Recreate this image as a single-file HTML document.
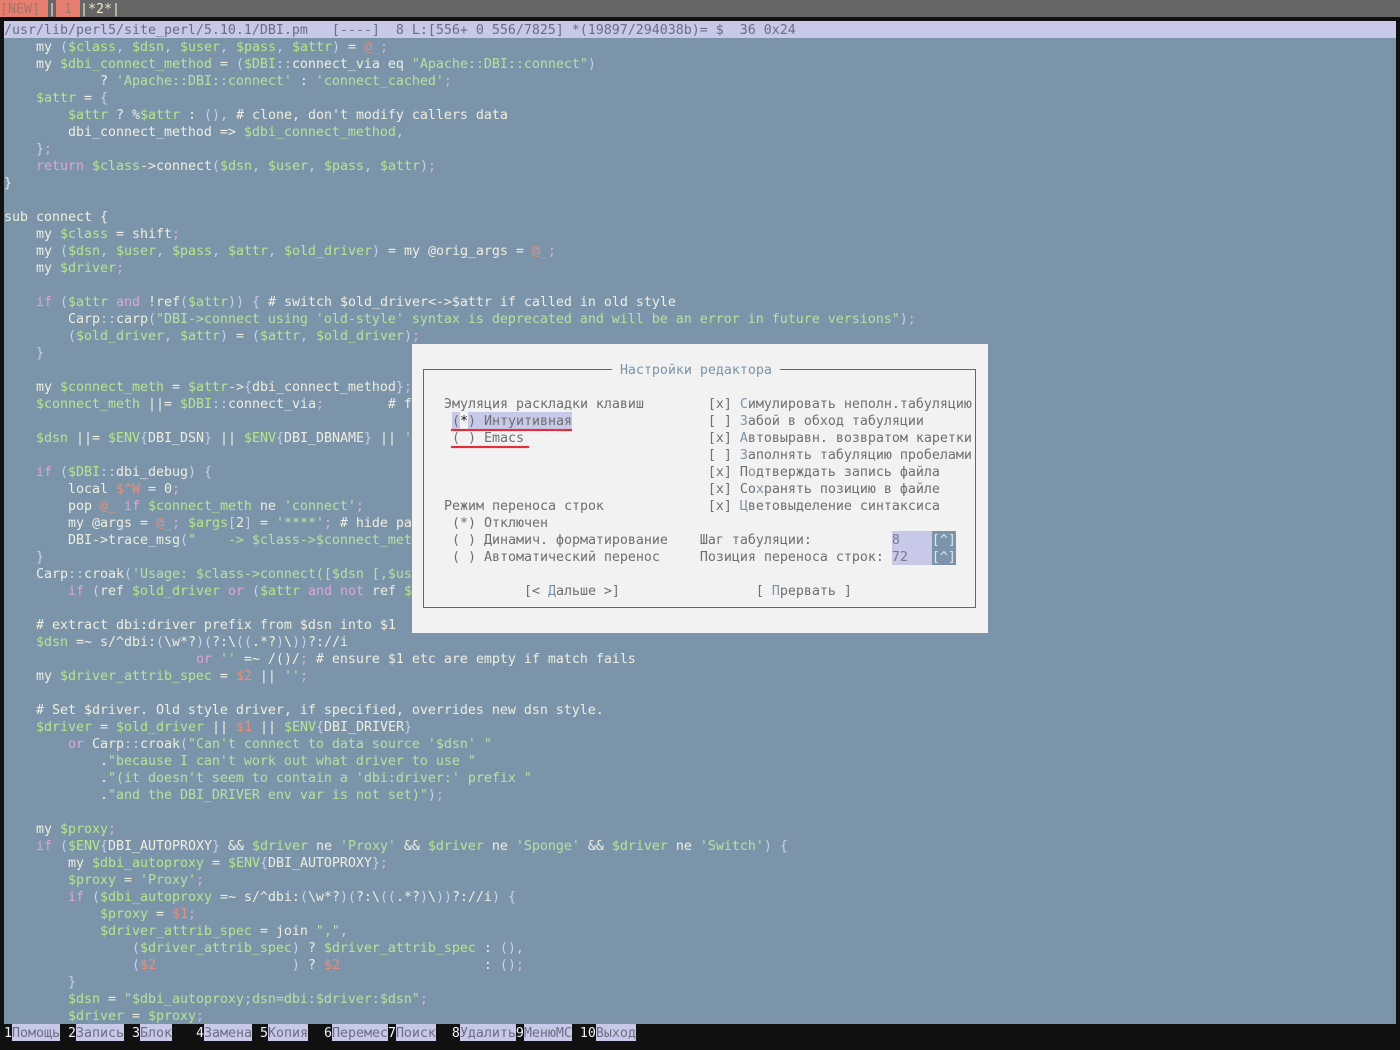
<!DOCTYPE html>
<html><head><meta charset="utf-8"><style>
html,body{margin:0;padding:0;width:1400px;height:1050px;overflow:hidden;background:#111}
pre{margin:0;font:13.33px/17px "DejaVu Sans Mono","Liberation Mono",monospace;letter-spacing:-.027px;white-space:pre;position:absolute}
#top{position:absolute;left:0;top:0;width:1400px;height:17px;background:#666}
#top pre{left:0;top:1px;color:#f0e8c8}
.sal{background:#e57f70;color:#a87468}
#st{position:absolute;left:4px;top:21px;width:1392px;height:17px;background:#c8c8e8}
#st pre{left:0;top:1px;color:#6a6e80}
#ed{position:absolute;left:4px;top:38px;width:1392px;height:986px;background:#7b94aa;overflow:hidden}
#ed pre{left:0;top:1px;color:#eeeee0}
b{font-weight:normal;color:#b6e68e}
i{font-style:normal;color:#c6d0ea}
s{text-decoration:none;color:#e5907c}
em{font-style:normal;color:#dca6dc}
u{text-decoration:none;color:#b9e0a0}
a{color:#d8aee0}
#dlg{position:absolute;left:412px;top:344px;width:576px;height:289px;background:#f2f2f2}
#dlg pre{left:0;top:1px;color:#6c7070}
#box{position:absolute;left:11px;top:25px;width:551px;height:237px;border:1px solid #666}
#gap{position:absolute;left:200px;top:20px;width:168px;height:10px;background:#f2f2f2}
.h{color:#7b94aa}
.blk{display:inline-block;height:17px;line-height:19px;vertical-align:top;position:relative;top:-1px}
.sel{background:#c8c8e8}
.cur{display:inline-block;height:17px;line-height:19px;vertical-align:top;background:#f4f4f4;color:#111}
.inp{background:#c8c8e8;color:#777c88}
.sp{background:#7b94aa;color:#dfe6f0}
.ul{position:absolute;height:2px;background:#e0303e;box-shadow:0 0 1px #e88}
#fn{position:absolute;left:4px;top:1024px;width:1392px;height:17px}
#fn pre{left:0;top:1px;color:#f2f2f2}
#fn span{background:#c8c8e8;color:#6c7084}
</style></head><body>
<div id="top"><pre><span class="sal blk">[NEW] </span>|<span class="sal blk"> 1 </span>|*2*|</pre></div>
<div id="st"><pre>/usr/lib/perl5/site_perl/5.10.1/DBI.pm   [----]  8 L:[556+ 0 556/7825] *(19897/294038b)= $  36 0x24</pre></div>
<div id="ed"><pre>    my <i>(</i><b>$class</b><i>,</i> <b>$dsn</b><i>,</i> <b>$user</b><i>,</i> <b>$pass</b><i>,</i> <b>$attr</b><i>)</i> = <s>@_</s><a>;</a>
    my <b>$dbi_connect_method</b> = <i>(</i><b>$DBI</b><i>::</i>connect_via eq <u>"Apache::DBI::connect"</u><i>)</i>
            ? <u>'Apache::DBI::connect'</u> : <u>'connect_cached'</u><a>;</a>
    <b>$attr</b> = <i>{</i>
        <b>$attr</b> ? %<b>$attr</b> : <i>(),</i> # clone, don't modify callers data
        dbi_connect_method =&gt; <b>$dbi_connect_method</b><i>,</i>
    <i>}</i><a>;</a>
    <em>return</em> <b>$class</b>-&gt;connect<i>(</i><b>$dsn</b><i>,</i> <b>$user</b><i>,</i> <b>$pass</b><i>,</i> <b>$attr</b><i>)</i><a>;</a>
}

sub connect {
    my <b>$class</b> = shift<a>;</a>
    my <i>(</i><b>$dsn</b><i>,</i> <b>$user</b><i>,</i> <b>$pass</b><i>,</i> <b>$attr</b><i>,</i> <b>$old_driver</b><i>)</i> = my @orig_args = <s>@_</s><a>;</a>
    my <b>$driver</b><a>;</a>

    <em>if</em> <i>(</i><b>$attr</b> <em>and</em> !ref<i>(</i><b>$attr</b><i>))</i> <i>{</i> # switch $old_driver&lt;-&gt;$attr if called in old style
        Carp<i>::</i>carp<i>(</i><u>"DBI-&gt;connect using 'old-style' syntax is deprecated and will be an error in future versions"</u><i>)</i><a>;</a>
        <i>(</i><b>$old_driver</b><i>,</i> <b>$attr</b><i>)</i> = <i>(</i><b>$attr</b><i>,</i> <b>$old_driver</b><i>)</i><a>;</a>
    <i>}</i>

    my <b>$connect_meth</b> = <b>$attr</b>-&gt;<i>{</i>dbi_connect_method<i>}</i><a>;</a>
    <b>$connect_meth</b> ||= <b>$DBI</b><i>::</i>connect_via<a>;</a>        # f

    <b>$dsn</b> ||= <b>$ENV</b><i>{</i>DBI_DSN<i>}</i> || <b>$ENV</b><i>{</i>DBI_DBNAME<i>}</i> || <u>'</u>

    <em>if</em> <i>(</i><b>$DBI</b><i>::</i>dbi_debug<i>)</i> <i>{</i>
        local <s>$^W</s> = 0<a>;</a>
        pop <s>@_</s> <em>if</em> <b>$connect_meth</b> ne <u>'connect'</u><a>;</a>
        my @args = <s>@_</s><a>;</a> <b>$args</b><i>[</i>2<i>]</i> = <u>'****'</u><a>;</a> # hide pa
        DBI-&gt;trace_msg<i>(</i><u>"    -&gt; $class-&gt;$connect_met</u>
    <i>}</i>
    Carp<i>::</i>croak<i>(</i><u>'Usage: $class-&gt;connect([$dsn [,$us</u>
        <em>if</em> <i>(</i>ref <b>$old_driver</b> <em>or</em> <i>(</i><b>$attr</b> <em>and</em> <em>not</em> ref <b>$</b>

    # extract dbi:driver prefix from $dsn into $1
    <b>$dsn</b> =~ s/^dbi:<i>(</i>\w*?<i>)(</i>?:\<i>((</i>.*?<i>)</i>\<i>))</i>?://i
                        <em>or</em> <u>''</u> =~ /()/<a>;</a> # ensure $1 etc are empty if match fails
    my <b>$driver_attrib_spec</b> = <s>$2</s> || <u>''</u><a>;</a>

    # Set $driver. Old style driver, if specified, overrides new dsn style.
    <b>$driver</b> = <b>$old_driver</b> || <s>$1</s> || <b>$ENV</b><i>{</i>DBI_DRIVER<i>}</i>
        <em>or</em> Carp<i>::</i>croak<i>(</i><u>"Can't connect to data source '$dsn' "</u>
            .<u>"because I can't work out what driver to use "</u>
            .<u>"(it doesn't seem to contain a 'dbi:driver:' prefix "</u>
            .<u>"and the DBI_DRIVER env var is not set)"</u><i>)</i><a>;</a>

    my <b>$proxy</b><a>;</a>
    <em>if</em> <i>(</i><b>$ENV</b><i>{</i>DBI_AUTOPROXY<i>}</i> &amp;&amp; <b>$driver</b> ne <u>'Proxy'</u> &amp;&amp; <b>$driver</b> ne <u>'Sponge'</u> &amp;&amp; <b>$driver</b> ne <u>'Switch'</u><i>)</i> <i>{</i>
        my <b>$dbi_autoproxy</b> = <b>$ENV</b><i>{</i>DBI_AUTOPROXY<i>}</i><a>;</a>
        <b>$proxy</b> = <u>'Proxy'</u><a>;</a>
        <em>if</em> <i>(</i><b>$dbi_autoproxy</b> =~ s/^dbi:<i>(</i>\w*?<i>)(</i>?:\<i>((</i>.*?<i>)</i>\<i>))</i>?://i<i>)</i> <i>{</i>
            <b>$proxy</b> = <s>$1</s><a>;</a>
            <b>$driver_attrib_spec</b> = join <u>","</u><i>,</i>
                <i>(</i><b>$driver_attrib_spec</b><i>)</i> ? <b>$driver_attrib_spec</b> : <i>(),</i>
                <i>(</i><s>$2</s>                 <i>)</i> ? <s>$2</s>                  : <i>()</i><a>;</a>
        <i>}</i>
        <b>$dsn</b> = <u>"$dbi_autoproxy;dsn=dbi:$driver:$dsn"</u><a>;</a>
        <b>$driver</b> = <b>$proxy</b><a>;</a></pre></div>
<div id="dlg">
<div id="box"></div><div id="gap"></div>
<pre>

                          <span class="h">Настройки редактора</span>

    Эмуляция раскладки клавиш        [x] <span class="h">С</span>имулировать неполн.табуляцию
     <span class="sel blk">(<span class="cur">*</span>) Интуитивная</span>                 [ ] <span class="h">З</span>абой в обход табуляции
     ( ) Emacs                       [x] <span class="h">А</span>втовыравн. возвратом каретки
                                     [ ] <span class="h">З</span>аполнять табуляцию пробелами
                                     [x] П<span class="h">о</span>дтверждать запись файла
                                     [x] Со<span class="h">х</span>ранять позицию в файле
    Режим переноса строк             [x] <span class="h">Ц</span>ветовыделение синтаксиса
     (*) Отключен
     ( ) Динамич. форматирование    Шаг табуляции:          <span class="inp blk">8    </span><span class="sp blk">[^]</span>
     ( ) Автоматический перенос     Позиция переноса строк: <span class="inp blk">72   </span><span class="sp blk">[^]</span>

              [&lt; <span class="h">Д</span>альше &gt;]                 [ <span class="h">П</span>рервать ]</pre>
<div class="ul" style="left:39px;top:85px;width:121px"></div>
<div class="ul" style="left:39px;top:102px;width:78px"></div>
</div>
<div id="fn"><pre>1<span class="blk">Помощь</span> 2<span class="blk">Запись</span> 3<span class="blk">Блок</span>   4<span class="blk">Замена</span> 5<span class="blk">Копия</span>  6<span class="blk">Перемес</span>7<span class="blk">Поиск</span>  8<span class="blk">Удалить</span>9<span class="blk">МенюМС</span> 10<span class="blk">Выход</span></pre></div>
</body></html>
